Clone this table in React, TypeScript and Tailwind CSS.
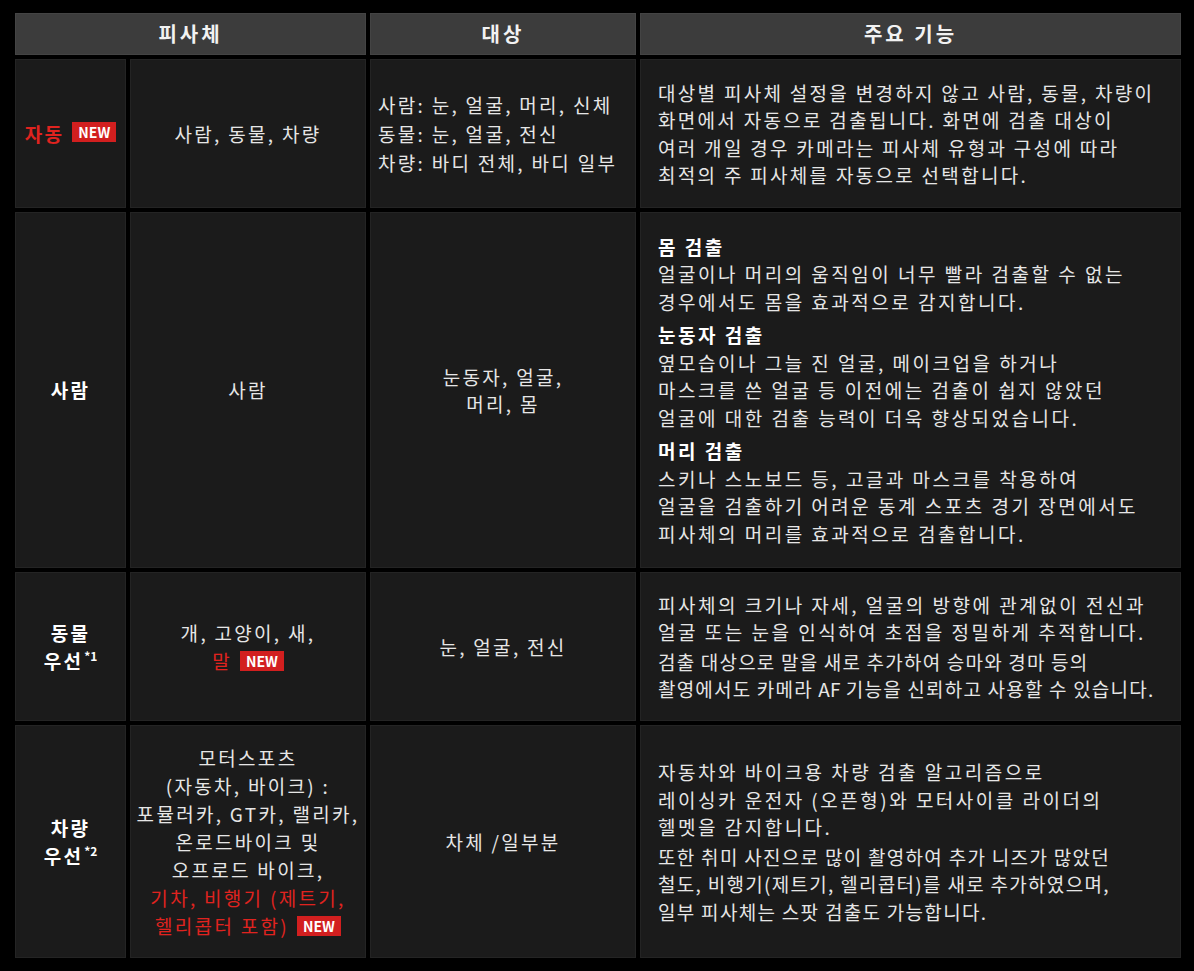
import React from "react";

const New = () => (
  <span className="inline-flex items-center justify-center bg-[#d21f1f] text-white font-bold text-[14px] leading-none px-[6px] h-[20px] tracking-normal align-middle ml-[8px] relative top-[-2px]">
    NEW
  </span>
);

const Head = ({ children, className = "" }: { children: React.ReactNode; className?: string }) => (
  <div className={"bg-[#3c3c3c] border border-[#444] flex items-center justify-center text-[20px] font-bold text-[#f2f2f2] tracking-[3px] " + className}>
    {children}
  </div>
);

const Cell = ({ children, className = "" }: { children: React.ReactNode; className?: string }) => (
  <div className={"bg-[#1b1b1b] border border-[#242424] flex items-center whitespace-nowrap " + className}>{children}</div>
);

const Sup = ({ children }: { children: React.ReactNode }) => (
  <sup className="text-[12px] relative top-[-8px] ml-[1px] tracking-normal">{children}</sup>
);

export default function App() {
  return (
    <div className="min-h-[971px] w-[1194px] bg-black pt-[13px] pl-[15px] font-['Noto_Sans_CJK_KR',sans-serif] text-[#e6e6e6] text-[19px] tracking-[2.3px] leading-[27.5px]">
      <div className="grid grid-cols-[111px_236px_266px_541px] grid-rows-[42px_149px_356px_149px_233px] gap-[4px]">
        <Head className="col-span-2">피사체</Head>
        <Head>대상</Head>
        <Head>주요 기능</Head>

        {/* Row 1 */}
        <Cell className="justify-center">
          <span className="text-[#e0231f] font-bold">자동</span>
          <New />
        </Cell>
        <Cell className="justify-center">사람, 동물, 차량</Cell>
        <Cell className="pl-[7px] leading-[29px]">
          <div>
            <div>사람: 눈, 얼굴, 머리, 신체</div>
            <div>동물: 눈, 얼굴, 전신</div>
            <div>차량: 바디 전체, 바디 일부</div>
          </div>
        </Cell>
        <Cell className="pl-[17px]">
          <div>
            대상별 피사체 설정을 변경하지 않고 사람, 동물, 차량이
            <br />
            화면에서 자동으로 검출됩니다. 화면에 검출 대상이
            <br />
            여러 개일 경우 카메라는 피사체 유형과 구성에 따라
            <br />
            최적의 주 피사체를 자동으로 선택합니다.
          </div>
        </Cell>

        {/* Row 2 */}
        <Cell className="justify-center font-bold text-white">사람</Cell>
        <Cell className="justify-center">사람</Cell>
        <Cell className="justify-center text-center">
          <div>
            눈동자, 얼굴,
            <br />
            머리, 몸
          </div>
        </Cell>
        <Cell className="pl-[17px] tracking-[2.5px]">
          <div className="flex flex-col gap-[6px]">
            <div>
              <div className="font-bold text-white">몸 검출</div>
              <div>
                얼굴이나 머리의 움직임이 너무 빨라 검출할 수 없는
                <br />
                경우에서도 몸을 효과적으로 감지합니다.
              </div>
            </div>
            <div>
              <div className="font-bold text-white">눈동자 검출</div>
              <div>
                옆모습이나 그늘 진 얼굴, 메이크업을 하거나
                <br />
                마스크를 쓴 얼굴 등 이전에는 검출이 쉽지 않았던
                <br />
                얼굴에 대한 검출 능력이 더욱 향상되었습니다.
              </div>
            </div>
            <div>
              <div className="font-bold text-white">머리 검출</div>
              <div>
                스키나 스노보드 등, 고글과 마스크를 착용하여
                <br />
                얼굴을 검출하기 어려운 동계 스포츠 경기 장면에서도
                <br />
                피사체의 머리를 효과적으로 검출합니다.
              </div>
            </div>
          </div>
        </Cell>

        {/* Row 3 */}
        <Cell className="justify-center text-center font-bold text-white">
          <div>
            동물
            <br />
            우선<Sup>*1</Sup>
          </div>
        </Cell>
        <Cell className="justify-center text-center">
          <div>
            개, 고양이, 새,
            <br />
            <span className="text-[#e0231f]">말</span>
            <New />
          </div>
        </Cell>
        <Cell className="justify-center">눈, 얼굴, 전신</Cell>
        <Cell className="pl-[17px]">
          <div className="flex flex-col gap-[2px]">
            <div className="tracking-[2.5px]">
              피사체의 크기나 자세, 얼굴의 방향에 관계없이 전신과
              <br />
              얼굴 또는 눈을 인식하여 초점을 정밀하게 추적합니다.
            </div>
            <div className="tracking-[1.2px]">
              검출 대상으로 말을 새로 추가하여 승마와 경마 등의
              <br />
              촬영에서도 카메라 <span className="tracking-normal">AF</span> 기능을 신뢰하고 사용할 수 있습니다.
            </div>
          </div>
        </Cell>

        {/* Row 4 */}
        <Cell className="justify-center text-center font-bold text-white">
          <div>
            차량
            <br />
            우선<Sup>*2</Sup>
          </div>
        </Cell>
        <Cell className="justify-center text-center">
          <div className="leading-[28px]">
            모터스포츠
            <br />
            (자동차, 바이크) :
            <br />
            포뮬러카, GT카, 랠리카,
            <br />
            온로드바이크 및
            <br />
            오프로드 바이크,
            <br />
            <span className="text-[#e0231f]">
              기차, 비행기 (제트기,
              <br />
              헬리콥터 포함)
            </span>
            <New />
          </div>
        </Cell>
        <Cell className="justify-center">차체 /일부분</Cell>
        <Cell className="pl-[17px]">
          <div className="flex flex-col gap-[2px]">
            <div className="tracking-[2.5px]">
              자동차와 바이크용 차량 검출 알고리즘으로
              <br />
              레이싱카 운전자 (오픈형)와 모터사이클 라이더의
              <br />
              헬멧을 감지합니다.
            </div>
            <div className="tracking-[1.3px]">
              또한 취미 사진으로 많이 촬영하여 추가 니즈가 많았던
              <br />
              철도, 비행기(제트기, 헬리콥터)를 새로 추가하였으며,
              <br />
              일부 피사체는 스팟 검출도 가능합니다.
            </div>
          </div>
        </Cell>
      </div>
    </div>
  );
}
